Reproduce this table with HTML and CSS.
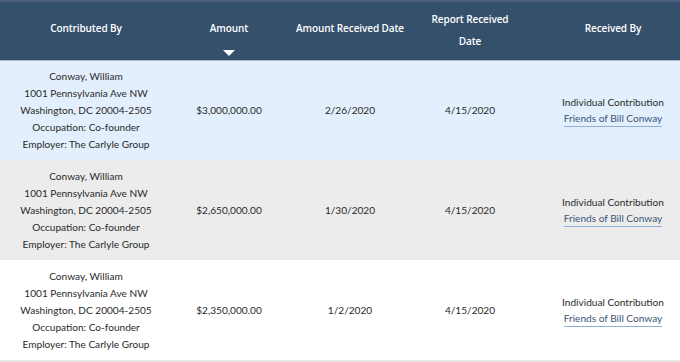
FILE: index.html
```html
<!DOCTYPE html>
<html>
<head>
<meta charset="utf-8">
<link rel="stylesheet" href="styles.css">
</head>
<body>
<div class="table">
  <div class="row head">
    <div class="cell c1">Contributed By</div>
    <div class="cell c2 sorted">Amount<span class="arrow"></span></div>
    <div class="cell c3">Amount Received Date</div>
    <div class="cell c4 two">Report Received<br>Date</div>
    <div class="cell c5">Received By</div>
  </div>
  <div class="row r-blue">
    <div class="cell c1">Conway, William<br>1001 Pennsylvania Ave NW<br>Washington, DC 20004-2505<br>Occupation: Co-founder<br>Employer: The Carlyle Group</div>
    <div class="cell c2">$3,000,000.00</div>
    <div class="cell c3">2/26/2020</div>
    <div class="cell c4">4/15/2020</div>
    <div class="cell c5">Individual Contribution<br><a class="link" href="#">Friends of Bill Conway</a></div>
  </div>
  <div class="row r-gray">
    <div class="cell c1">Conway, William<br>1001 Pennsylvania Ave NW<br>Washington, DC 20004-2505<br>Occupation: Co-founder<br>Employer: The Carlyle Group</div>
    <div class="cell c2">$2,650,000.00</div>
    <div class="cell c3">1/30/2020</div>
    <div class="cell c4">4/15/2020</div>
    <div class="cell c5">Individual Contribution<br><a class="link" href="#">Friends of Bill Conway</a></div>
  </div>
  <div class="row r-white">
    <div class="cell c1">Conway, William<br>1001 Pennsylvania Ave NW<br>Washington, DC 20004-2505<br>Occupation: Co-founder<br>Employer: The Carlyle Group</div>
    <div class="cell c2">$2,350,000.00</div>
    <div class="cell c3">1/2/2020</div>
    <div class="cell c4">4/15/2020</div>
    <div class="cell c5">Individual Contribution<br><a class="link" href="#">Friends of Bill Conway</a></div>
  </div>
</div>
</body>
</html>
```

FILE: styles.css
```css
html, body {
  margin: 0;
  padding: 0;
  background: #ffffff;
}
body {
  font-family: Lato, "Open Sans", sans-serif;
  color: #2a2a2a;
}
.table {
  width: 680px;
  display: flex;
  flex-direction: column;
}
.row {
  display: grid;
  grid-template-columns: 172px 114px 128px 112px 154px;
  height: 100px;
  align-items: center;
  font-size: 10.1px;
  line-height: 17px;
  text-align: center;
}
.cell {
  display: flex;
  flex-direction: column;
  align-items: center;
  justify-content: center;
}
.c5 {
  padding-left: 20px;
}
.head {
  height: 58px;
  background: #34506b;
  border-top: 2px solid #4b5e82;
  border-bottom: 1px solid #a6bad0;
  color: #ffffff;
  font-family: "Open Sans", Lato, sans-serif;
  font-weight: 600;
  font-size: 10px;
  line-height: 22px;
  letter-spacing: -0.1px;
}
.head .cell {
  display: block;
  padding-bottom: 7px;
}
.head .two {
  padding-bottom: 3px;
}
.head .c5 {
  padding-left: 20px;
}
.sorted {
  position: relative;
}
.arrow {
  position: absolute;
  left: 50%;
  top: 33px;
  margin-left: -6px;
  width: 0;
  height: 0;
  border-left: 6px solid transparent;
  border-right: 6px solid transparent;
  border-top: 6px solid #ffffff;
}
.r-blue {
  height: 99px;
  background: #e3effc;
}
.r-gray {
  background: #ececec;
}
.r-white {
  background: #ffffff;
  border-bottom: 2px solid #e8e8e8;
}
.link {
  color: #3b5678;
  text-decoration: none;
  border-bottom: 1px solid #8fb0d4;
  line-height: 15px;
}
```
